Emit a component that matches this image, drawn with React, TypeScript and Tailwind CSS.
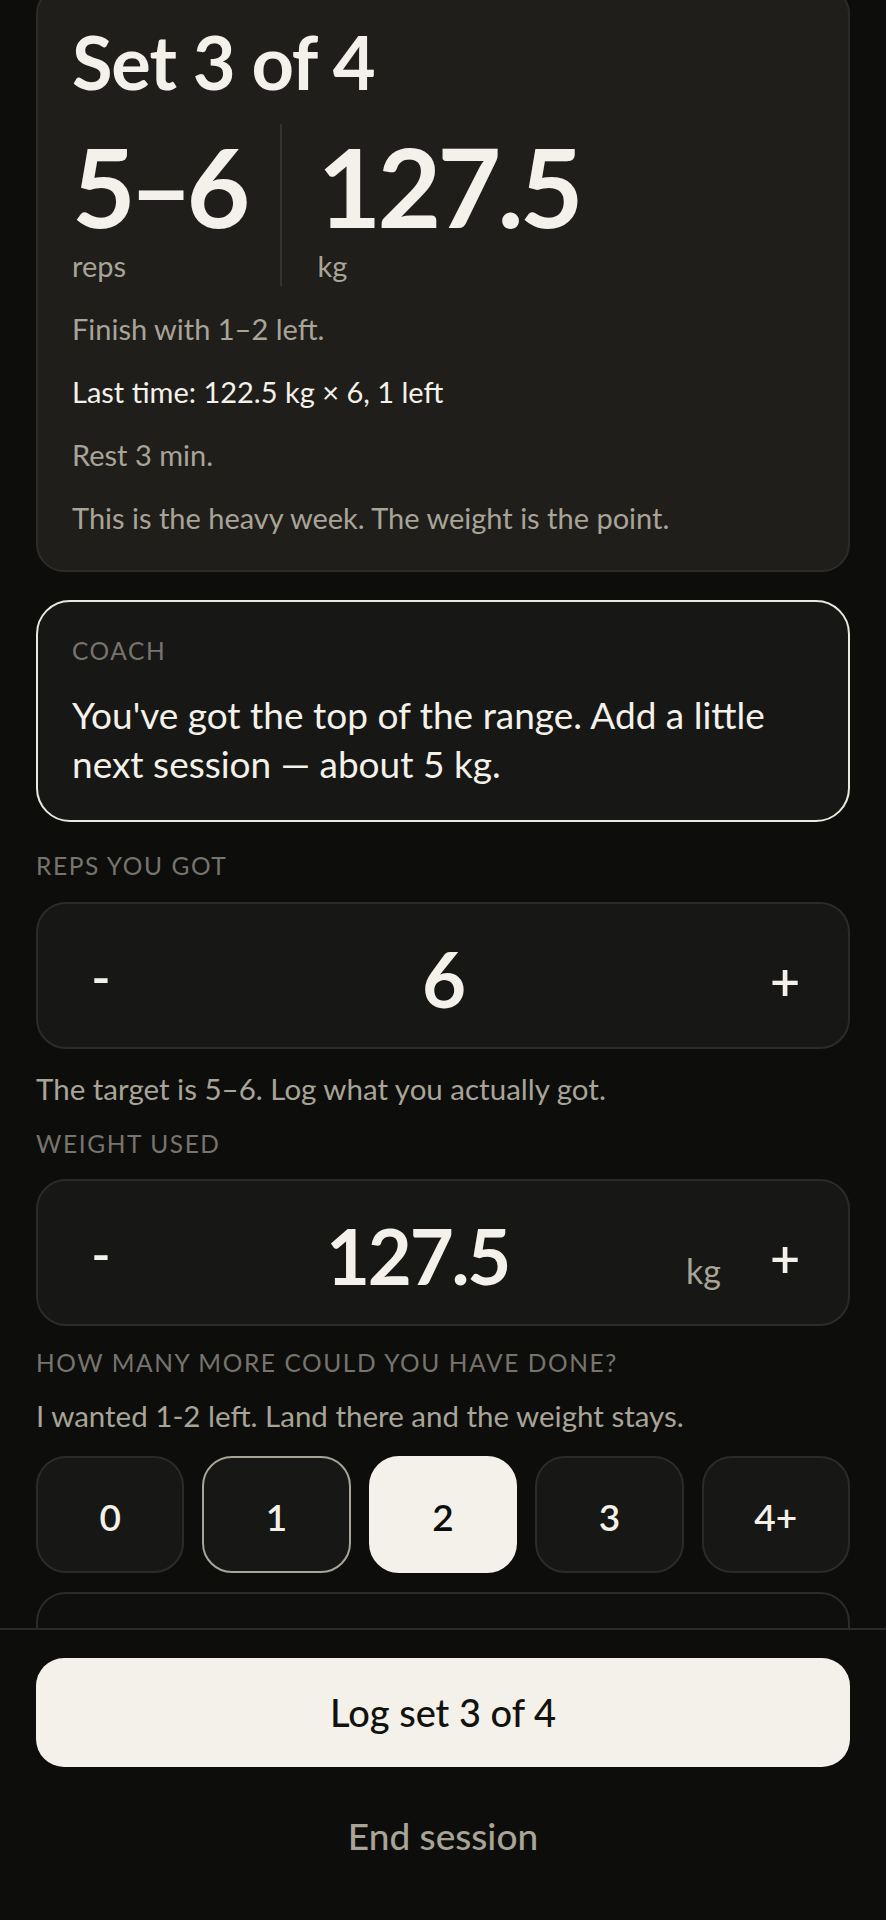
import type { ReactNode } from 'react'

const rirOptions = ['0', '1', '2', '3', '4+']

function Label({ children, className = '' }: { children: ReactNode; className?: string }) {
  return (
    <div className={`text-[24.5px] leading-[32px] tracking-[0.065em] uppercase text-[#77746c] ${className}`}>
      {children}
    </div>
  )
}

function Stepper({ value, unit }: { value: string; unit?: string }) {
  return (
    <div className="flex h-[147px] items-center rounded-[30px] border-2 border-[#2c2b27] bg-[#171715] px-[15px]">
      <button className="flex h-[117px] w-[96px] items-center justify-center text-[52px] font-semibold leading-none text-[#f3f1e9]">
        -
      </button>
      <div className="flex-1 pt-[6px] text-center text-[76px] font-bold leading-none tracking-[-0.03em] text-[#f3f1e9]">
        {value}
      </div>
      {unit && <span className="mr-[16px] mt-[37px] text-[34px] leading-none text-[#a8a497]">{unit}</span>}
      <button className="flex h-[117px] w-[96px] items-center justify-center pt-[8px] text-[52px] font-semibold leading-none text-[#f3f1e9]">
        +
      </button>
    </div>
  )
}

export default function App() {
  return (
    <div className="min-h-[1920px] bg-[#0d0d0c] font-['Lato','Noto_Sans',sans-serif] text-[#f3f1e9]">
      <main className="h-[1628px] overflow-hidden px-[36px]">
        {/* current set */}
        <section className="-mt-[14px] rounded-[28px] border-2 border-[#2c2b27] bg-[#1f1e1b] px-[34px] pt-[34px] pb-[32px]">
          <h1 className="text-[74px] font-bold leading-[80px] tracking-[-0.015em]">Set 3 of 4</h1>
          <div className="mt-[22px] flex">
            <div className="pr-[36px]">
              <div className="text-[110px] font-bold leading-[122px] tracking-[-0.06em]">5–6</div>
              <div className="text-[29px] leading-[40px] text-[#a8a497]">reps</div>
            </div>
            <div className="border-l-2 border-[#35332f] pl-[36px]">
              <div className="text-[110px] font-bold leading-[122px] tracking-[-0.035em]">127.5</div>
              <div className="text-[29px] leading-[40px] text-[#a8a497]">kg</div>
            </div>
          </div>
          <div className="mt-[23px] flex flex-col gap-[23px] text-[29px] leading-[40px]">
            <p className="text-[#a8a497]">Finish with 1–2 left.</p>
            <p>Last time: 122.5 kg × 6, 1 left</p>
            <p className="text-[#a8a497]">Rest 3 min.</p>
            <p className="text-[#a8a497]">This is the heavy week. The weight is the point.</p>
          </div>
        </section>

        {/* coach */}
        <section className="mt-[28px] rounded-[34px] border-2 border-[#ebe8df] bg-[#171715] px-[34px] pt-[33px] pb-[32px]">
          <Label>Coach</Label>
          <p className="mt-[23px] text-[37px] leading-[49px]">
            You've got the top of the range. Add a little next session — about 5 kg.
          </p>
        </section>

        <Label className="mt-[28px]">Reps you got</Label>
        <div className="mt-[20px]">
          <Stepper value="6" />
        </div>
        <p className="mt-[20px] text-[29.5px] leading-[40px] text-[#a8a497]">The target is 5–6. Log what you actually got.</p>

        <Label className="mt-[19px]">Weight used</Label>
        <div className="mt-[19px]">
          <Stepper value="127.5" unit="kg" />
        </div>

        <Label className="mt-[21px]">How many more could you have done?</Label>
        <p className="mt-[17px] text-[29.5px] leading-[40px] text-[#a8a497]">I wanted 1-2 left. Land there and the weight stays.</p>
        <div className="mt-[20px] grid grid-cols-5 gap-[18px]">
          {rirOptions.map((o) => {
            const style =
              o === '2'
                ? 'border-[#f3f1e9] bg-[#f3f1e9] text-[#0d0d0c]'
                : o === '1'
                  ? 'border-[#a8a497] bg-[#171715] text-[#f3f1e9]'
                  : 'border-[#2c2b27] bg-[#171715] text-[#f3f1e9]'
            return (
              <button
                key={o}
                className={`flex h-[117px] items-center justify-center rounded-[30px] border-2 pt-[4px] text-[37px] font-semibold ${style}`}
              >
                {o}
              </button>
            )
          })}
        </div>
        <div className="mt-[19px] h-[150px] rounded-[30px] border-2 border-[#2c2b27] bg-[#0f0f0e]" />
      </main>

      <footer className="border-t-2 border-[#2a2926] px-[36px] pt-[28px]">
        <button className="flex h-[109px] w-full items-center justify-center rounded-[28px] bg-[#f3f1e9] text-[38px] font-medium text-[#121210]">
          Log set 3 of 4
        </button>
        <button className="mt-[28px] w-full py-[17px] text-[37px] font-medium leading-[48px] text-[#a8a497]">
          End session
        </button>
      </footer>
    </div>
  )
}
